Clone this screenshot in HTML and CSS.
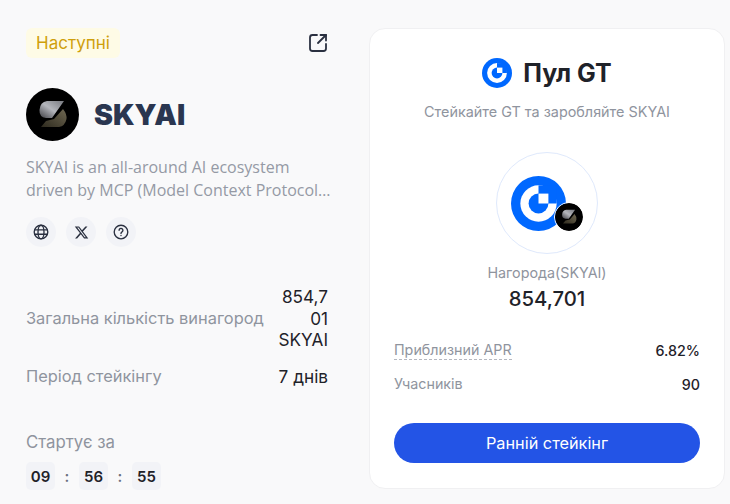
FILE: index.html
```html
<!DOCTYPE html>
<html lang="uk">
<head>
  <meta charset="UTF-8">
  <meta name="viewport" content="width=device-width, initial-scale=1.0">
  <title>Пул GT - SKYAI</title>
  <link rel="stylesheet" href="styles.css">
</head>
<body>
  <div class="page">
    <!-- Ліва колонка: інформація про токен -->
    <div class="info">
      <div class="info-top">
        <span class="tag">Наступні</span>
        <svg class="share" viewBox="1 1 18 18" fill="none" stroke="#2a3040" stroke-width="1.8" stroke-linecap="round" stroke-linejoin="round">
          <path d="M9 2H4.500A2.500 2.500 0 0 0 2 4.500v11A2.500 2.500 0 0 0 4.500 18h11a2.500 2.500 0 0 0 2.500-2.500V11"/>
          <path d="M12.500 2H18v5.500"/>
          <path d="M18 2l-8 8"/>
        </svg>
      </div>

      <div class="token">
        <svg class="token-logo" viewBox="0 0 53 53">
          <defs>
            <linearGradient id="skyTop" x1="0" y1="1" x2="1" y2="0">
              <stop offset="0" stop-color="#3f3f44"/>
              <stop offset="0.5" stop-color="#b4b6bc"/>
              <stop offset="1" stop-color="#77797f"/>
            </linearGradient>
            <linearGradient id="skyBottom" x1="0" y1="1" x2="1" y2="0">
              <stop offset="0" stop-color="#2e2a1e"/>
              <stop offset="1" stop-color="#6f6852"/>
            </linearGradient>
          </defs>
          <circle cx="26.500" cy="26.500" r="26.500" fill="#000"/>
          <path d="M38 13H21q-7 1-7.500 9-.5 7 6.500 8h6z" fill="url(#skyTop)"/>
          <path d="M37 21q4 5 3.500 10-1.500 7-7.500 8H15l5-6 8-2z" fill="url(#skyBottom)"/>
        </svg>
        <h1 class="token-name">SKYAI</h1>
      </div>

      <p class="desc">SKYAI is an all-around AI ecosystem<br>driven by MCP (Model Context Protocol…</p>

      <div class="links">
        <span class="link">
          <svg viewBox="0 0 16 16" fill="none" stroke="#2a3040" stroke-width="1.35">
            <circle cx="8" cy="8" r="6.800"/>
            <ellipse cx="8" cy="8" rx="3" ry="6.800"/>
            <path d="M1.500 5.800h13M1.500 10.200h13"/>
          </svg>
        </span>
        <span class="link">
          <svg class="x-icon" viewBox="0 0 24 24" fill="#2a3040">
            <path d="M18.244 2.250h3.308l-7.227 8.260 8.502 11.240H16.170l-5.214-6.817L4.990 21.750H1.680l7.730-8.835L1.254 2.250H8.080l4.713 6.231zm-1.161 17.520h1.833L7.084 4.126H5.117z"/>
          </svg>
        </span>
        <span class="link">
          <svg viewBox="0 0 16 16" fill="none" stroke="#2a3040" stroke-width="1.35" stroke-linecap="round">
            <circle cx="8" cy="8" r="6.800"/>
            <path d="M6.100 6.300a1.900 1.900 0 1 1 2.900 1.600c-.7.400-1 .8-1 1.500"/>
            <path d="M8 11.500v.1"/>
          </svg>
        </span>
      </div>

      <div class="stats">
        <div class="stat">
          <span class="stat-label">Загальна кількість винагород</span>
          <span class="stat-value stat-value-narrow">854,701 SKYAI</span>
        </div>
        <div class="stat">
          <span class="stat-label">Період стейкінгу</span>
          <span class="stat-value">7 днів</span>
        </div>
      </div>

      <div class="start-label">Стартує за</div>
      <div class="countdown">
        <span class="cell">09</span>
        <span class="colon">:</span>
        <span class="cell">56</span>
        <span class="colon">:</span>
        <span class="cell">55</span>
      </div>
    </div>

    <!-- Картка пулу -->
    <div class="card">
      <div class="card-title">
        <svg class="gt-small" viewBox="0 0 100 100">
          <circle cx="50" cy="50" r="50" fill="#0068ff"/>
          <circle cx="50" cy="50" r="33" fill="#fff"/>
          <rect x="50" y="17" width="33" height="33" fill="#0068ff"/>
          <circle cx="50" cy="50" r="18" fill="#0068ff"/>
          <rect x="50" y="32" width="18" height="18" fill="#fff"/>
        </svg>
        <h2>Пул GT</h2>
      </div>
      <p class="card-sub">Стейкайте GT та заробляйте SKYAI</p>

      <div class="pool-ring">
        <div class="pool-logos">
          <svg class="gt-big" viewBox="0 0 100 100">
            <circle cx="50" cy="50" r="50" fill="#0068ff"/>
            <circle cx="50" cy="50" r="33" fill="#fff"/>
            <rect x="50" y="17" width="33" height="33" fill="#0068ff"/>
            <circle cx="50" cy="50" r="18" fill="#0068ff"/>
            <rect x="50" y="32" width="18" height="18" fill="#fff"/>
          </svg>
          <svg class="pool-badge" viewBox="0 0 53 53">
            <circle cx="26.500" cy="26.500" r="26.500" fill="#000"/>
            <path d="M38 13H21q-7 1-7.500 9-.5 7 6.500 8h6z" fill="url(#skyTop)"/>
            <path d="M37 21q4 5 3.500 10-1.500 7-7.500 8H15l5-6 8-2z" fill="url(#skyBottom)"/>
          </svg>
        </div>
      </div>

      <div class="reward-label">Нагорода(SKYAI)</div>
      <div class="reward-value">854,701</div>

      <div class="rows">
        <div class="row">
          <span class="row-label dashed">Приблизний APR</span>
          <span class="row-value">6.82%</span>
        </div>
        <div class="row">
          <span class="row-label">Учасників</span>
          <span class="row-value">90</span>
        </div>
      </div>

      <button class="stake-btn">Ранній стейкінг</button>
    </div>
  </div>
</body>
</html>
```

FILE: styles.css
```css
* {
  box-sizing: border-box;
}
body {
  margin: 0;
  font-family: Inter, "Liberation Sans", sans-serif;
  background-color: #f9f9fa;
  color: #1f2229;
}
h1, h2, p {
  margin: 0;
}
.page {
  display: flex;
  gap: 41px;
  height: 504px;
  padding: 28px 5px 0 26px;
  overflow: hidden;
}

/* left column */
.info {
  width: 302px;
  flex-shrink: 0;
}
.info-top {
  display: flex;
  justify-content: space-between;
  align-items: center;
  height: 30px;
}
.tag {
  height: 30px;
  width: 94px;
  display: flex;
  align-items: center;
  justify-content: center;
  background: #fefbe6;
  color: #cf9f0c;
  font-size: 17px;
  border-radius: 6px;
}
.share {
  width: 18px;
  height: 18px;
  margin-right: 1px;
}
.token {
  display: flex;
  align-items: center;
  gap: 15px;
  margin-top: 30px;
}
.token-logo {
  width: 53px;
  height: 53px;
}
.token-name {
  font-size: 28.500px;
  font-weight: 900;
  color: #2a3650;
}
.desc {
  margin-top: 15px;
  font-family: "Open Sans", sans-serif;
  font-size: 16px;
  line-height: 23px;
  color: #959aa5;
  white-space: nowrap;
}
.links {
  display: flex;
  gap: 10px;
  margin-top: 15px;
}
.link {
  width: 30px;
  height: 30px;
  border-radius: 50%;
  background: #f2f3f7;
  display: flex;
  align-items: center;
  justify-content: center;
}
.link svg {
  width: 16px;
  height: 16px;
}
.link .x-icon {
  width: 15px;
  height: 15px;
}
.stats {
  margin-top: 39px;
  display: flex;
  flex-direction: column;
  gap: 15px;
}
.stat {
  display: flex;
  justify-content: space-between;
  align-items: center;
  gap: 12px;
}
.stat-label {
  font-size: 16.400px;
  color: #8f949e;
}
.stat-value {
  font-size: 17.200px;
  line-height: 21.500px;
  text-align: right;
}
.stat-value-narrow {
  width: 51px;
  flex-shrink: 0;
  overflow-wrap: anywhere;
}
.start-label {
  margin-top: 45px;
  font-size: 16.800px;
  line-height: 20px;
  color: #8f949e;
}
.countdown {
  display: flex;
  align-items: center;
  gap: 9px;
  margin-top: 10px;
}
.cell {
  width: 29px;
  height: 28px;
  display: flex;
  align-items: center;
  justify-content: center;
  background: #f2f3f7;
  border-radius: 5px;
  font-size: 15px;
  font-weight: 600;
}
.colon {
  width: 6px;
  text-align: center;
  font-size: 15px;
  font-weight: 600;
  color: #6b7080;
}

/* pool card */
.card {
  width: 356px;
  height: 461px;
  flex-shrink: 0;
  background: #fff;
  border: 1px solid #f0f0f2;
  border-radius: 16px;
  padding: 29px 24px 0;
  display: flex;
  flex-direction: column;
  align-items: center;
}
.card-title {
  display: flex;
  align-items: center;
  gap: 11px;
}
.gt-small {
  width: 30px;
  height: 30px;
}
.card-title h2 {
  font-size: 25px;
  font-weight: 700;
  color: #1f2229;
}
.card-sub {
  margin-top: 14px;
  font-size: 14.400px;
  line-height: 20px;
  color: #8f949e;
}
.pool-ring {
  width: 102px;
  height: 102px;
  margin-top: 30px;
  border: 1px solid #dfe9fc;
  border-radius: 50%;
  display: flex;
  align-items: center;
  justify-content: center;
}
.pool-logos {
  position: relative;
  width: 72px;
  height: 55px;
}
.gt-big {
  display: block;
  width: 55px;
  height: 55px;
}
.pool-badge {
  position: absolute;
  right: -1px;
  bottom: -1px;
  width: 30px;
  height: 30px;
  border: 1px solid #fff;
  border-radius: 50%;
}
.reward-label {
  margin-top: 9px;
  font-size: 14.300px;
  line-height: 20px;
  color: #8f949e;
}
.reward-value {
  margin-top: 3px;
  font-size: 20.300px;
  line-height: 26px;
  font-weight: 500;
}
.rows {
  width: 100%;
  margin-top: 29px;
  display: flex;
  flex-direction: column;
  gap: 15px;
}
.row {
  display: flex;
  justify-content: space-between;
  align-items: center;
}
.row-label {
  font-size: 14.300px;
  line-height: 18px;
  color: #8f949e;
}
.dashed {
  border-bottom: 1px dashed #b5b8c0;
}
.row-value {
  font-size: 14.300px;
  font-weight: 500;
}
.stake-btn {
  width: 100%;
  height: 40px;
  margin-top: 30px;
  border: none;
  border-radius: 20px;
  background: #2354e6;
  color: #fff;
  font-family: inherit;
  font-size: 16.300px;
  cursor: pointer;
}
```
